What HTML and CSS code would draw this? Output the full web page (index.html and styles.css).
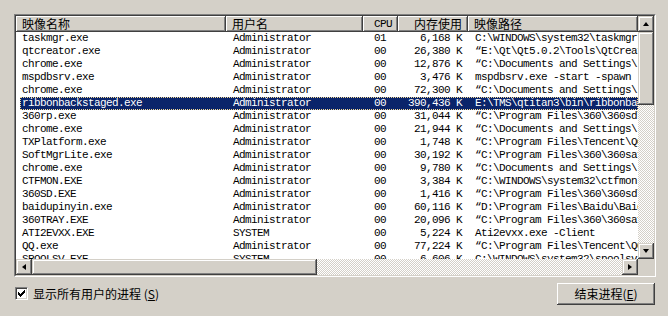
FILE: index.html
```html
<!DOCTYPE html>
<html lang="zh-CN">
<head>
  <meta charset="UTF-8" />
  <title>Windows 任务管理器 - 进程</title>
  <link rel="stylesheet" href="styles.css">
</head>
<body>

<!-- process list -->
<div class="frame">
  <div class="frame-inner">
    <div class="list">
      <div class="list-head">
        <div class="hcell cjk">映像名称</div>
        <div class="hcell cjk">用户名</div>
        <div class="hcell right">CPU</div>
        <div class="hcell cjk right">内存使用</div>
        <div class="hcell cjk">映像路径</div>
      </div>
      <div class="list-body">
        <div class="row"><span class="name">taskmgr.exe</span><span class="user">Administrator</span><span class="cpu">01</span><span class="mem">6,168 K</span><span class="path">C:\WINDOWS\system32\taskmgr.exe</span></div>
        <div class="row"><span class="name">qtcreator.exe</span><span class="user">Administrator</span><span class="cpu">00</span><span class="mem">26,380 K</span><span class="path">“E:\Qt\Qt5.0.2\Tools\QtCreator\bin\qtcreator.exe”</span></div>
        <div class="row"><span class="name">chrome.exe</span><span class="user">Administrator</span><span class="cpu">00</span><span class="mem">12,876 K</span><span class="path">“C:\Documents and Settings\...</span></div>
        <div class="row"><span class="name">mspdbsrv.exe</span><span class="user">Administrator</span><span class="cpu">00</span><span class="mem">3,476 K</span><span class="path">mspdbsrv.exe -start -spawn</span></div>
        <div class="row"><span class="name">chrome.exe</span><span class="user">Administrator</span><span class="cpu">00</span><span class="mem">72,300 K</span><span class="path">“C:\Documents and Settings\...</span></div>
        <div class="row sel"><span class="name">ribbonbackstaged.exe</span><span class="user">Administrator</span><span class="cpu">00</span><span class="mem">390,436 K</span><span class="path">E:\TMS\qtitan3\bin\ribbonbackstaged.exe</span></div>
        <div class="row"><span class="name">360rp.exe</span><span class="user">Administrator</span><span class="cpu">00</span><span class="mem">31,044 K</span><span class="path">“C:\Program Files\360\360sd\360rp.exe”</span></div>
        <div class="row"><span class="name">chrome.exe</span><span class="user">Administrator</span><span class="cpu">00</span><span class="mem">21,944 K</span><span class="path">“C:\Documents and Settings\...</span></div>
        <div class="row"><span class="name">TXPlatform.exe</span><span class="user">Administrator</span><span class="cpu">00</span><span class="mem">1,748 K</span><span class="path">“C:\Program Files\Tencent\QQ\Bin\TXPlatform.exe”</span></div>
        <div class="row"><span class="name">SoftMgrLite.exe</span><span class="user">Administrator</span><span class="cpu">00</span><span class="mem">30,192 K</span><span class="path">“C:\Program Files\360\360safe\SoftMgrLite.exe”</span></div>
        <div class="row"><span class="name">chrome.exe</span><span class="user">Administrator</span><span class="cpu">00</span><span class="mem">9,780 K</span><span class="path">“C:\Documents and Settings\...</span></div>
        <div class="row"><span class="name">CTFMON.EXE</span><span class="user">Administrator</span><span class="cpu">00</span><span class="mem">3,384 K</span><span class="path">“C:\WINDOWS\system32\ctfmon.exe”</span></div>
        <div class="row"><span class="name">360SD.EXE</span><span class="user">Administrator</span><span class="cpu">00</span><span class="mem">1,416 K</span><span class="path">“C:\Program Files\360\360sd\360SD.EXE”</span></div>
        <div class="row"><span class="name">baidupinyin.exe</span><span class="user">Administrator</span><span class="cpu">00</span><span class="mem">60,116 K</span><span class="path">“D:\Program Files\Baidu\BaiduPinyin\baidupinyin.exe”</span></div>
        <div class="row"><span class="name">360TRAY.EXE</span><span class="user">Administrator</span><span class="cpu">00</span><span class="mem">20,096 K</span><span class="path">“C:\Program Files\360\360safe\safemon\360tray.exe”</span></div>
        <div class="row"><span class="name">ATI2EVXX.EXE</span><span class="user">SYSTEM</span><span class="cpu">00</span><span class="mem">5,224 K</span><span class="path">Ati2evxx.exe -Client</span></div>
        <div class="row"><span class="name">QQ.exe</span><span class="user">Administrator</span><span class="cpu">00</span><span class="mem">77,224 K</span><span class="path">“C:\Program Files\Tencent\QQ\Bin\QQ.exe”</span></div>
        <div class="row"><span class="name">SPOOLSV.EXE</span><span class="user">SYSTEM</span><span class="cpu">00</span><span class="mem">6,606 K</span><span class="path">C:\WINDOWS\system32\spoolsv.exe</span></div>
      </div>
    </div>

    <div class="vscroll">
      <div class="sb-btn"><i class="arrow up"></i></div>
      <div class="sb-thumb v"></div>
      <div class="sb-track"></div>
      <div class="sb-btn"><i class="arrow down"></i></div>
    </div>

    <div class="hscroll">
      <div class="sb-btn"><i class="arrow left"></i></div>
      <div class="sb-thumb h"></div>
      <div class="sb-track"></div>
      <div class="sb-btn"><i class="arrow right"></i></div>
    </div>

    <div class="corner"></div>
  </div>
</div>

<div class="footer">
  <label class="check">
    <span class="box">
      <svg width="7" height="7" viewBox="0 0 7 7"><path d="M0 2h1v1h1v1h1V3h1V2h1V1h1V0h1v3H6v1H5v1H4v1H3v1H2V6H1V5H0z" fill="#000"/></svg>
    </span>
    <span class="cjk">显示所有用户的进程 (<u>S</u>)</span>
  </label>
  <button class="end-btn cjk">结束进程(<u>E</u>)</button>
</div>

</body>
</html>
```

FILE: styles.css
```css
* {
  box-sizing: border-box;
  margin: 0;
  padding: 0;
}

body {
  width: 668px;
  height: 316px;
  overflow: hidden;
  background: #d4d0c8;
  color: #000;
  padding: 14px 12px 0 14px;
  font-family: "Liberation Mono", "Noto Sans CJK SC", monospace;
  font-size: 11px;
  letter-spacing: -0.6px;
}

.cjk {
  font-family: "Noto Sans CJK SC", "Liberation Sans", sans-serif;
  font-size: 12px;
  letter-spacing: 0;
}

/* sunken list frame */
.frame {
  width: 642px;
  height: 263px;
  border: 1px solid;
  border-color: #808080 #fff #fff #808080;
}

.frame-inner {
  height: 100%;
  border: 1px solid;
  border-color: #404040 #d4d0c8 #d4d0c8 #404040;
  display: grid;
  grid-template-columns: 622px 16px;
  grid-template-rows: 243px 16px;
}

.list {
  background: #fff;
  overflow: hidden;
  display: flex;
  flex-direction: column;
}

.list-head,
.row {
  display: grid;
  grid-template-columns: 210px 137px 35px 70px 170px;
}

.list-head {
  height: 16px;
  flex: none;
}

.hcell {
  height: 16px;
  line-height: 16px;
  padding: 0 6px;
  background: #d4d0c8;
  white-space: nowrap;
  overflow: hidden;
  box-shadow: inset -1px -1px #404040, inset 1px 1px #fff, inset -2px -2px #808080;
}

.hcell.right {
  text-align: right;
}

.list-body {
  flex: 1;
  overflow: hidden;
}

.row {
  position: relative;
  height: 13px;
  line-height: 13px;
  white-space: nowrap;
}

.row span {
  overflow: hidden;
}

.name { padding-left: 6px; }
.user { padding-left: 7px; }
.cpu { padding-left: 11px; }
.mem { text-align: right; padding-right: 6px; }
.path { padding-left: 7px; }

.row.sel {
  color: #fff;
  background: linear-gradient(to right, transparent 4px, #0a246a 4px);
}

/* focus rectangle */
.row.sel::after {
  content: "";
  position: absolute;
  top: 0;
  bottom: 0;
  left: 4px;
  right: 0;
  border: 1px dotted #f5db95;
}

/* scrollbars */
.vscroll,
.hscroll {
  display: flex;
  background: repeating-conic-gradient(#fff 0 25%, #d4d0c8 0 50%) 0 0 / 2px 2px;
}

.vscroll {
  flex-direction: column;
}

.sb-btn,
.sb-thumb {
  background: #d4d0c8;
  box-shadow: inset -1px -1px #404040, inset 1px 1px #d4d0c8, inset -2px -2px #808080, inset 2px 2px #fff;
}

.sb-btn {
  width: 16px;
  height: 16px;
  flex: none;
  display: flex;
  align-items: center;
  justify-content: center;
}

.sb-thumb.v { height: 73px; flex: none; }
.sb-thumb.h { width: 285px; flex: none; }

.sb-track {
  flex: 1;
}

.arrow {
  display: block;
  width: 0;
  height: 0;
}

.arrow.up {
  width: 1px;
  border-left: 3px solid transparent;
  border-right: 3px solid transparent;
  border-bottom: 4px solid #000;
  margin-top: -1px;
}

.arrow.down {
  width: 1px;
  border-left: 3px solid transparent;
  border-right: 3px solid transparent;
  border-top: 4px solid #000;
}

.arrow.left {
  height: 1px;
  border-top: 3px solid transparent;
  border-bottom: 3px solid transparent;
  border-right: 4px solid #000;
  margin-left: -1px;
}

.arrow.right {
  height: 1px;
  border-top: 3px solid transparent;
  border-bottom: 3px solid transparent;
  border-left: 4px solid #000;
}

.corner {
  background: #d4d0c8;
}

/* bottom bar */
.footer {
  display: flex;
  justify-content: space-between;
  align-items: flex-start;
}

.check {
  display: flex;
  align-items: center;
  gap: 5px;
  margin: 8px 0 0 1px;
}

.check .box {
  width: 13px;
  height: 13px;
  background: #fff;
  border: 1px solid;
  border-color: #808080 #fff #fff #808080;
  box-shadow: inset 1px 1px #404040, inset -1px -1px #d4d0c8;
  display: flex;
  align-items: center;
  justify-content: center;
}

.check .box svg {
  display: block;
}

.end-btn {
  width: 98px;
  height: 22px;
  margin: 6px 1px 0 0;
  border: none;
  background: #d4d0c8;
  color: #000;
  box-shadow: inset -1px -1px #404040, inset 1px 1px #fff, inset -2px -2px #808080, inset 2px 2px #d4d0c8;
  line-height: 20px;
}
```
